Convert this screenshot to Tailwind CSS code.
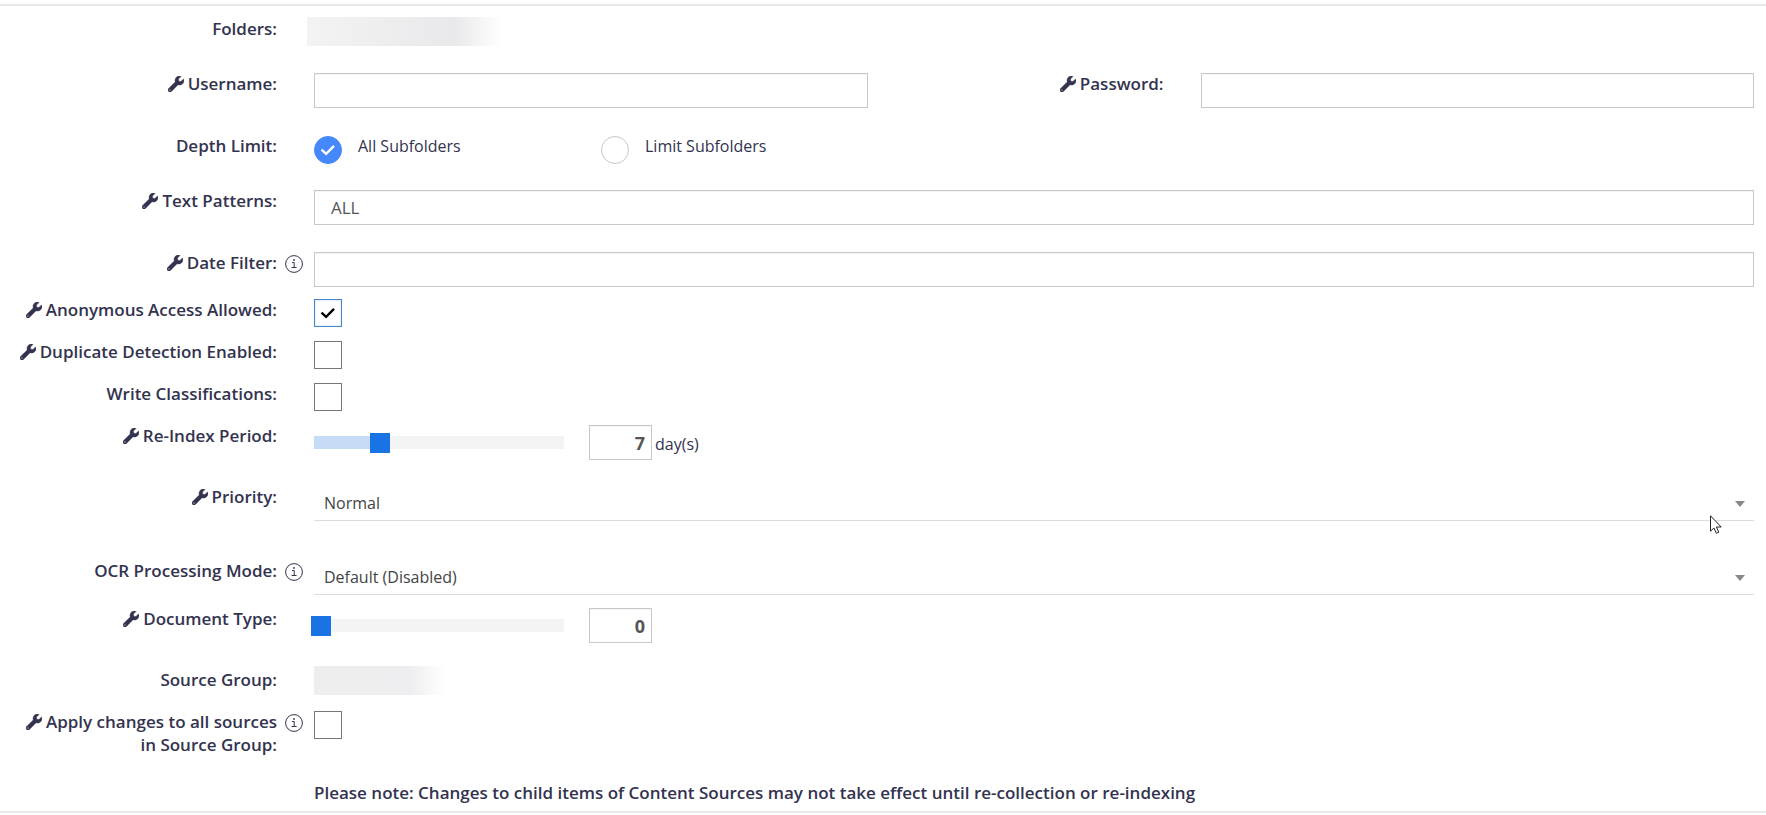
<!DOCTYPE html>
<html lang="en">
<head>
  <meta charset="UTF-8">
  <meta name="viewport" content="width=device-width, initial-scale=1.0">
  <title>Content Source Settings</title>
  <script src="https://cdn.jsdelivr.net/npm/@tailwindcss/browser@4"></script>
</head>
<body class="bg-white font-['Open_Sans',sans-serif] text-base leading-[23px] text-[#33334f]">
  <!-- shared icons -->
  <svg class="hidden">
    <symbol id="wrench" viewBox="0 0 512 512">
      <path fill="currentColor" stroke="currentColor" stroke-width="14" d="M507.73 109.1c-2.24-9.03-13.54-12.09-20.12-5.51l-74.36 74.36-67.88-11.31-11.31-67.88 74.36-74.36c6.62-6.62 3.43-17.9-5.66-20.16-47.38-11.74-99.55.91-136.58 37.93-39.64 39.64-50.55 97.1-34.05 147.2L18.74 402.76c-24.99 24.99-24.99 65.51 0 90.5 24.99 24.99 65.51 24.99 90.5 0l213.21-213.21c50.12 16.71 107.47 5.68 147.37-34.22 37.07-37.07 49.7-89.32 37.91-136.73zM64 472c-13.25 0-24-10.75-24-24 0-13.26 10.75-24 24-24s24 10.74 24 24c0 13.25-10.75 24-24 24z"/>
    </symbol>
    <symbol id="info" viewBox="0 0 18 18">
      <circle cx="9" cy="9" r="8.4" fill="none" stroke="currentColor" stroke-width="1"/>
      <path d="M7 7.5h2.2v5M6.6 12.5h5" fill="none" stroke="currentColor" stroke-width="1"/>
      <circle cx="9" cy="5" r=".9" fill="currentColor"/>
    </symbol>
    <symbol id="check" viewBox="0 0 28 28">
      <path d="M7.5 13.6l4.6 4.2 7.9-8" fill="none" stroke="currentColor" stroke-width="2.4"/>
    </symbol>
    <symbol id="caret" viewBox="0 0 10 6">
      <path d="M0 0h10L5 6z" fill="currentColor"/>
    </symbol>
  </svg>

  <form class="relative mt-1 border-y-2 border-[#e9e9e9] pt-3">
    <div class="flex pr-3 pb-8">
      <div class="-mt-px w-[277px] shrink-0 pl-4 text-right text-[17px] font-semibold">Folders:</div>
      <div class="h-[23px] w-[37px] shrink-0"></div>
      <div class="-mt-px -mb-[5px] -ml-[7px] h-[29px] w-[195px] bg-linear-to-r from-[#f3f3f4] via-[#e9e9eb] via-75% to-white"></div>
    </div>

    <div class="flex gap-[19px] pr-3 pb-[27px]">
      <div class="flex flex-1">
        <label for="username" class="-mt-px mr-[37px] w-[277px] shrink-0 pl-4 text-right text-[17px] font-semibold"><svg class="mr-1 inline size-4 align-[-2px]"><use href="#wrench"/></svg>Username:</label>
        <input type="text" id="username" class="h-[35px] min-w-0 flex-1 border border-[#c8c8c8] px-4 text-[17px] text-[#555] shadow-[inset_0_1px_1px_#0000000d]">
      </div>
      <div class="flex flex-1">
        <label for="password" class="-mt-px mr-[37px] w-[277px] shrink-0 pl-4 text-right text-[17px] font-semibold"><svg class="mr-1 inline size-4 align-[-2px]"><use href="#wrench"/></svg>Password:</label>
        <input type="password" id="password" class="h-[35px] min-w-0 flex-1 border border-[#c8c8c8] px-4 text-[17px] text-[#555] shadow-[inset_0_1px_1px_#0000000d]">
      </div>
    </div>

    <div class="flex pr-3 pb-[26px]">
      <div class="-mt-px mr-[37px] w-[277px] shrink-0 pl-4 text-right text-[17px] font-semibold">Depth Limit:</div>
      <label class="flex w-[287px]">
        <span class="mr-4 grid pt-px">
          <input type="radio" name="depth" checked class="peer size-7 appearance-none rounded-full border border-[#c8c8c8] [grid-area:1/1] checked:border-[#4488fa] checked:bg-[#4488fa]">
          <svg class="hidden size-7 text-white [grid-area:1/1] peer-checked:block"><use href="#check"/></svg>
        </span>
        All Subfolders
      </label>
      <label class="flex">
        <span class="mr-4 grid pt-px">
          <input type="radio" name="depth" class="peer size-7 appearance-none rounded-full border border-[#c8c8c8] [grid-area:1/1] checked:border-[#4488fa] checked:bg-[#4488fa]">
          <svg class="hidden size-7 text-white [grid-area:1/1] peer-checked:block"><use href="#check"/></svg>
        </span>
        Limit Subfolders
      </label>
    </div>

    <div class="flex pr-3 pb-[27px]">
      <label for="patterns" class="-mt-px mr-[37px] w-[277px] shrink-0 pl-4 text-right text-[17px] font-semibold"><svg class="mr-1 inline size-4 align-[-2px]"><use href="#wrench"/></svg>Text Patterns:</label>
      <input type="text" id="patterns" value="ALL" class="h-[35px] min-w-0 flex-1 border border-[#c8c8c8] px-4 text-[17px] text-[#555] shadow-[inset_0_1px_1px_#0000000d]">
    </div>

    <div class="flex pr-3 pb-3">
      <label for="datefilter" class="-mt-px w-[277px] shrink-0 pl-4 text-right text-[17px] font-semibold"><svg class="mr-1 inline size-4 align-[-2px]"><use href="#wrench"/></svg>Date Filter:</label>
      <button type="button" aria-label="About Date Filter" class="flex h-[23px] w-[37px] shrink-0 items-center pl-2"><svg class="size-[18px]"><use href="#info"/></svg></button>
      <input type="text" id="datefilter" class="h-[35px] min-w-0 flex-1 border border-[#c8c8c8] px-4 text-[17px] text-[#555] shadow-[inset_0_1px_1px_#0000000d]">
    </div>

    <div class="flex pr-3 pb-3.5">
      <label for="anonymous" class="-mt-px mr-[37px] w-[277px] shrink-0 pl-4 text-right text-[17px] font-semibold"><svg class="mr-1 inline size-4 align-[-2px]"><use href="#wrench"/></svg>Anonymous Access Allowed:</label>
      <span class="grid">
        <input type="checkbox" id="anonymous" checked class="peer size-7 appearance-none border border-[#777] [grid-area:1/1] checked:border-[#4a86d0] checked:shadow-[inset_0_0_2px_#4a86d066]">
        <svg class="pointer-events-none hidden size-7 text-black [grid-area:1/1] peer-checked:block"><use href="#check"/></svg>
      </span>
    </div>

    <div class="flex pr-3 pb-3.5">
      <label for="duplicate" class="-mt-px mr-[37px] w-[277px] shrink-0 pl-4 text-right text-[17px] font-semibold"><svg class="mr-1 inline size-4 align-[-2px]"><use href="#wrench"/></svg>Duplicate Detection Enabled:</label>
      <span class="grid">
        <input type="checkbox" id="duplicate" class="peer size-7 appearance-none border border-[#777] [grid-area:1/1] checked:border-[#4a86d0]">
        <svg class="pointer-events-none hidden size-7 text-black [grid-area:1/1] peer-checked:block"><use href="#check"/></svg>
      </span>
    </div>

    <div class="flex pr-3 pb-3.5">
      <label for="classifications" class="-mt-px mr-[37px] w-[277px] shrink-0 pl-4 text-right text-[17px] font-semibold">Write Classifications:</label>
      <span class="grid">
        <input type="checkbox" id="classifications" class="peer size-7 appearance-none border border-[#777] [grid-area:1/1] checked:border-[#4a86d0]">
        <svg class="pointer-events-none hidden size-7 text-black [grid-area:1/1] peer-checked:block"><use href="#check"/></svg>
      </span>
    </div>

    <div class="flex pr-3 pb-[26px]">
      <label for="reindex" class="-mt-px mr-[37px] w-[277px] shrink-0 pl-4 text-right text-[17px] font-semibold"><svg class="mr-1 inline size-4 align-[-2px]"><use href="#wrench"/></svg>Re-Index Period:</label>
      <div class="flex items-center">
        <div class="mr-[25px] flex h-[13px] w-[250px] items-center" style="background: linear-gradient(to right, #c5dbf6 25%, #f4f4f4 25%)">
          <input type="range" id="reindex" min="0" max="28" value="7" class="-mx-[3px] h-5 w-[256px] shrink-0 appearance-none bg-transparent [&::-webkit-slider-thumb]:size-5 [&::-webkit-slider-thumb]:appearance-none [&::-webkit-slider-thumb]:bg-[#1a73e4]">
        </div>
        <input type="text" value="7" aria-label="Re-Index Period in days" class="h-[35px] w-[63px] border border-[#c8c8c8] px-1.5 text-right text-lg font-bold text-[#555] shadow-[inset_0_1px_1px_#0000000d]">
        <span class="pt-1 pl-[3px]">day(s)</span>
      </div>
    </div>

    <div class="flex pr-3 pb-[39px]">
      <label for="priority" class="-mt-px mr-[37px] w-[277px] shrink-0 pl-4 text-right text-[17px] font-semibold"><svg class="mr-1 inline size-4 align-[-2px]"><use href="#wrench"/></svg>Priority:</label>
      <div class="grid flex-1 items-center justify-items-end">
        <select id="priority" class="h-[35px] w-full appearance-none border-b border-[#dcdcdc] pr-8 pl-2.5 text-[#444] [grid-area:1/1]">
          <option>Low</option>
          <option selected>Normal</option>
          <option>High</option>
        </select>
        <svg class="pointer-events-none mr-[9px] h-1.5 w-2.5 text-[#888] [grid-area:1/1]"><use href="#caret"/></svg>
      </div>
    </div>

    <div class="flex pr-3 pb-[13px]">
      <label for="ocr" class="-mt-px w-[277px] shrink-0 pl-4 text-right text-[17px] font-semibold">OCR Processing Mode:</label>
      <button type="button" aria-label="About OCR Processing Mode" class="flex h-[23px] w-[37px] shrink-0 items-center pl-2"><svg class="size-[18px]"><use href="#info"/></svg></button>
      <div class="grid flex-1 items-center justify-items-end">
        <select id="ocr" class="h-[35px] w-full appearance-none border-b border-[#dcdcdc] pr-8 pl-2.5 text-[#444] [grid-area:1/1]">
          <option selected>Default (Disabled)</option>
          <option>Enabled</option>
        </select>
        <svg class="pointer-events-none mr-[9px] h-1.5 w-2.5 text-[#888] [grid-area:1/1]"><use href="#caret"/></svg>
      </div>
    </div>

    <div class="flex pr-3 pb-[26px]">
      <label for="doctype" class="-mt-px mr-[37px] w-[277px] shrink-0 pl-4 text-right text-[17px] font-semibold"><svg class="mr-1 inline size-4 align-[-2px]"><use href="#wrench"/></svg>Document Type:</label>
      <div class="flex items-center">
        <div class="mr-[25px] flex h-[13px] w-[250px] items-center bg-[#f4f4f4]">
          <input type="range" id="doctype" min="0" max="28" value="0" class="-mx-[3px] h-5 w-[256px] shrink-0 appearance-none bg-transparent [&::-webkit-slider-thumb]:size-5 [&::-webkit-slider-thumb]:appearance-none [&::-webkit-slider-thumb]:bg-[#1a73e4]">
        </div>
        <input type="text" value="0" aria-label="Document Type value" class="h-[35px] w-[63px] border border-[#c8c8c8] px-1.5 text-right text-lg font-bold text-[#555] shadow-[inset_0_1px_1px_#0000000d]">
      </div>
    </div>

    <div class="flex pr-3 pb-5">
      <div class="-mt-px mr-[37px] w-[277px] shrink-0 pl-4 text-right text-[17px] font-semibold">Source Group:</div>
      <div class="-mt-[3px] -mb-[4px] h-[29px] w-[130px] bg-linear-to-r from-[#eeeeef] via-[#eeeef0] via-75% to-white"></div>
    </div>

    <div class="flex pr-3 pb-[26px]">
      <label for="apply" class="-mt-px w-[277px] shrink-0 pl-4 text-right text-[17px] font-semibold"><svg class="mr-1 inline size-4 align-[-2px]"><use href="#wrench"/></svg>Apply changes to all sources in Source Group:</label>
      <button type="button" aria-label="About applying changes" class="flex h-[23px] w-[37px] shrink-0 items-center pl-2"><svg class="size-[18px]"><use href="#info"/></svg></button>
      <span class="grid self-start">
        <input type="checkbox" id="apply" class="peer size-7 appearance-none border border-[#777] [grid-area:1/1] checked:border-[#4a86d0]">
        <svg class="pointer-events-none hidden size-7 text-black [grid-area:1/1] peer-checked:block"><use href="#check"/></svg>
      </span>
    </div>

    <p class="-mt-px pr-3 pb-[7px] pl-[314px] text-[17px] font-semibold">Please note: Changes to child items of Content Sources may not take effect until re-collection or re-indexing</p>

    <!-- mouse pointer -->
    <svg class="pointer-events-none absolute top-[509px] right-11 h-[19px] w-3" viewBox="0 0 12 19">
      <path d="M.5 .8v15.4l3.4-3.2 2.5 5.3 2.4-1.1-2.4-5.2h4.8z" fill="#fff" stroke="#222" stroke-width="1"/>
    </svg>
  </form>
</body>
</html>
